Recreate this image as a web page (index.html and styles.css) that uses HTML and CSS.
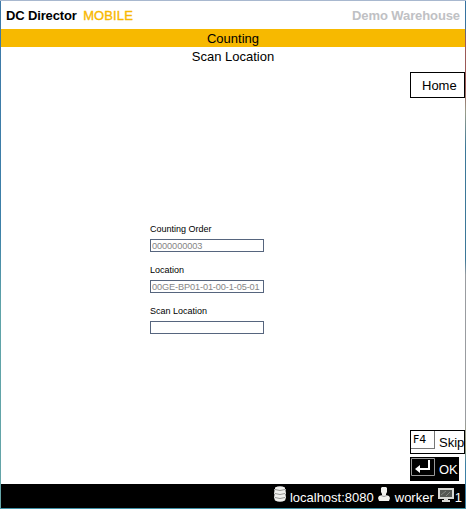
FILE: index.html
```html
<!DOCTYPE html>
<html lang="en">
<head>
<meta charset="utf-8">
<title>DC Director Mobile</title>
<link rel="stylesheet" href="styles.css">
</head>
<body>
<div class="window">
  <header class="header">
    <div class="brand">DC Director <span class="mobile">MOBILE</span></div>
    <div class="warehouse">Demo Warehouse</div>
  </header>
  <h1 class="title">Counting</h1>
  <h2 class="subtitle">Scan Location</h2>
  <nav class="top-actions"><button class="home">Home</button></nav>
  <main class="form">
    <label class="field"><span class="label">Counting Order</span><input class="input" value="0000000003" readonly></label>
    <label class="field"><span class="label">Location</span><input class="input location" value="00GE-BP01-01-00-1-05-01" readonly></label>
    <label class="field"><span class="label">Scan Location</span><input class="input"></label>
  </main>
  <div class="actions">
    <button class="skip"><span class="key">F4</span><span>Skip</span></button>
    <button class="ok"><svg class="enter" width="24" height="18" viewBox="0 0 24 18"><path class="frame" d="M.5 .5h23v17H.5z"/><path class="stroke" d="M18 2v9H8"/><path class="fill" d="M4 11l5-4v8z"/></svg><span>OK</span></button>
  </div>
  <footer class="status">
    <svg class="db" width="12" height="16" viewBox="0 0 12 16"><path d="M1 1.500Q6-1 11 1.500v1.500l1 .5-.5 1 .5 3-.5 1 .5 3-1 3Q6 17 1 14.500l-1-3 .5-3-.5-1 .5-3-.5-1L1 3z" fill="#f0f0ee"/><path d="M1 3.500q5 2 10 0M1 7.500q5 2 10 0M1 11.500q5 2 10 0" stroke="#969692" fill="none"/></svg>
    <span class="host">localhost:8080</span>
    <svg class="person" width="12" height="15" viewBox="0 0 12 15"><path d="M4 0h4l1 1v4L8 7v1l3 1 1 2-1 3H1l-1-3 1-2 3-1V7L3 5V1z" fill="#f1f1ee"/><path d="M3 8.500l3 1 3-1" stroke="#999" fill="none"/></svg>
    <span class="user">worker</span>
    <svg class="monitor" width="16" height="14" viewBox="0 0 16 14"><path d="M0 0h16v11h-6v1h2v2H4v-2h2v-1H0z" fill="#d7d8d4"/><path d="M2 2h12v7H2z" fill="#555853"/><path d="M3 7l5-4M8 8l4-4" stroke="#858883"/></svg>
    <span class="count">1</span>
  </footer>
</div>
</body>
</html>
```
FILE: styles.css
```css
* { box-sizing: border-box; }
body { margin: 0; font: 13px/18px "Liberation Sans", Arial, sans-serif; color: #000; background: #fff; }
.window {
  height: 509px; display: flex; flex-direction: column; border: 1px solid transparent;
  background:
    linear-gradient(#fff, #fff) padding-box,
    linear-gradient(#a8b8cf, #a8b8cf) top / 100% 1px no-repeat border-box,
    linear-gradient(#4192a6, #4192a6) bottom / 100% 1px no-repeat border-box,
    linear-gradient(#3d79a8, #3c80a8 45%, #5ea3a8 60%, #65a5a8) left / 1px 100% no-repeat border-box,
    linear-gradient(#3673a0 0 5%, #9b5957 8% 17%, #999c8a 22%, #3b7898 29% 51%, #999ca0 54% 82%, #9b9d77 88%, #3c80a4 91%) right / 1px 100% no-repeat border-box;
}
.header { height: 28px; display: flex; justify-content: space-between; padding: 6px 5px 0; font-weight: bold; }
.brand { letter-spacing: -.14px; white-space: pre; }
.mobile { color: #f8b800; margin-left: 3px; letter-spacing: .1px; font-weight: normal; -webkit-text-stroke: .35px #f8b800; }
.warehouse { color: #bfc1c4; letter-spacing: -.1px; }
.title, .subtitle { margin: 0; height: 18px; font-size: 13px; line-height: 20px; font-weight: normal; text-align: center; }
.title { background: #f7b900; }
.subtitle { height: 24px; }
button { font: inherit; color: #000; border: 1px solid #000; border-radius: 0; padding: 0; background: #fff; display: flex; align-items: center; }
.top-actions { display: flex; justify-content: flex-end; margin-top: 1px; }
.home { width: 55px; height: 26px; padding: 2px 0 0 11px; }
.form { width: 114px; margin: 124px 0 0 149px; flex: 1; }
.field { display: block; height: 41px; }
.label { display: block; height: 17px; font-size: 9px; line-height: 14px; }
.input { display: block; width: 114px; height: 13px; padding: 0 1px; border: 1px solid #56657e; border-radius: 0; font: 9.2px/11px "Liberation Sans", Arial, sans-serif; letter-spacing: -.08px; color: #858585; background: #fff; outline: 0; }
.location { letter-spacing: -.12px; }
.actions { display: flex; flex-direction: column; align-items: flex-end; gap: 3px; margin-bottom: 3px; }
.skip { width: 55px; height: 24px; white-space: nowrap; gap: 4px; align-items: flex-start; line-height: 23px; }
.key { width: 24px; height: 18px; flex: none; border: 1px solid #777; border-width: 0 1px 1px 0; padding-left: 2px; text-align: left; font: 11px/17px "DejaVu Sans", sans-serif; letter-spacing: -.2px; }
.ok { width: 49px; height: 24px; margin-right: 6px; background: #000; color: #fff; gap: 4px; align-items: flex-start; line-height: 23px; }
.enter { flex: none; }
.frame { fill: none; stroke: #999; }
.stroke { fill: none; stroke: #fff; stroke-width: 2; }
.fill { fill: #fff; }
.status { height: 24px; flex: none; background: #000; color: #fff; display: flex; justify-content: flex-end; align-items: flex-start; padding: 2px 3px 0 0; line-height: 23px; }
.host { margin: 0 4px; }
.user { margin: 0 4px 0 5px; }
.monitor { margin-top: 2px; }
.count { margin-left: 1px; }
.person { margin-top: 1px; }
```
